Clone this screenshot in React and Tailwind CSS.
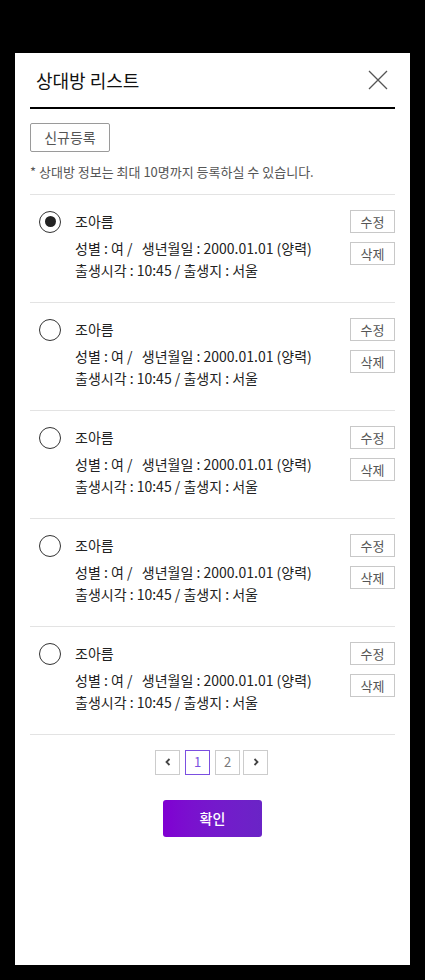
import React, { useState } from "react";

const people = [1, 2, 3, 4, 5].map((id) => ({
    id,
    name: "조아름",
    line1: "성별 : 여 /   생년월일 : 2000.01.01 (양력)",
    line2: "출생시각 : 10:45 / 출생지 : 서울",
}));

function Radio({ checked }) {
    return (
        <div className="w-[22px] h-[22px] rounded-full border border-[#333] flex items-center justify-center shrink-0">
            {checked && <div className="w-[11px] h-[11px] rounded-full bg-[#222]" />}
        </div>
    );
}

function SmallButton({ children }) {
    return (
        <button className="w-[45px] h-[23px] border border-[#c8c8c8] text-[13px] leading-none text-[#555] bg-white">
            {children}
        </button>
    );
}

export default function App() {
    const [selected, setSelected] = useState(1);

    return (
        <div
            className="min-h-[980px] bg-black pt-[53px] pb-[15px] px-[15px]"
            style={{ fontFamily: '"Noto Sans CJK KR", "Noto Sans", sans-serif' }}
        >
            <div className="bg-white h-[912px] px-[15px]">
                {/* header */}
                <div className="flex items-center justify-between h-[56px] border-b-2 border-black">
                    <span className="text-[18px] text-[#111] pl-[6px] pt-[1px]">상대방 리스트</span>
                    <button className="w-[22px] h-[22px] mr-[6px] mb-[1px] text-[#555]">
                        <svg viewBox="0 0 22 22" width="22" height="22" fill="none" stroke="currentColor" strokeWidth="1.3">
                            <path d="M2 2 L20 20 M20 2 L2 20" />
                        </svg>
                    </button>
                </div>

                <div className="pt-[14px]">
                    <button className="w-[80px] h-[29px] border border-[#9a9a9a] rounded-[2px] text-[14px] text-[#555]">
                        신규등록
                    </button>
                    <p className="mt-[10px] text-[13px] text-[#555]">
                        * 상대방 정보는 최대 10명까지 등록하실 수 있습니다.
                    </p>
                </div>

                <ul className="mt-[12px] border-t border-[#e3e3e3]">
                    {people.map((p) => (
                        <li
                            key={p.id}
                            className="flex h-[108px] border-b border-[#e3e3e3] pt-[15px]"
                            onClick={() => setSelected(p.id)}
                        >
                            <div className="pl-[9px] pt-[1px] w-[45px]">
                                <Radio checked={selected === p.id} />
                            </div>
                            <div className="flex-1 text-[14px] text-[#222] leading-[22px]">
                                <div>{p.name}</div>
                                <div className="mt-[5px] whitespace-pre">{p.line1}</div>
                                <div>{p.line2}</div>
                            </div>
                            <div className="flex flex-col gap-[9px]">
                                <SmallButton>수정</SmallButton>
                                <SmallButton>삭제</SmallButton>
                            </div>
                        </li>
                    ))}
                </ul>

                <div className="flex justify-center gap-[5px] mt-[15px] pr-[2px]">
                    <button className="w-[25px] h-[25px] border border-[#ccc] flex items-center justify-center">
                        <svg viewBox="0 0 8 8" width="8" height="8" fill="none" stroke="#444" strokeWidth="1.8">
                            <path d="M5.5 1 L2.5 4 L5.5 7" />
                        </svg>
                    </button>
                    <button className="w-[25px] h-[25px] border border-[#7b4fe0] text-[13px] text-[#7b4fe0]">1</button>
                    <button className="w-[25px] h-[25px] border border-[#ccc] text-[13px] text-[#777]">2</button>
                    <button className="w-[25px] h-[25px] -ml-[2px] border border-[#ccc] flex items-center justify-center">
                        <svg viewBox="0 0 8 8" width="8" height="8" fill="none" stroke="#444" strokeWidth="1.8">
                            <path d="M2.5 1 L5.5 4 L2.5 7" />
                        </svg>
                    </button>
                </div>

                <div className="flex justify-center mt-[25px]">
                    <button className="w-[99px] h-[37px] rounded-[3px] bg-gradient-to-r from-[#8000d2] to-[#6a24c6] text-white text-[14px] font-medium">
                        확인
                    </button>
                </div>
            </div>
        </div>
    );
}
